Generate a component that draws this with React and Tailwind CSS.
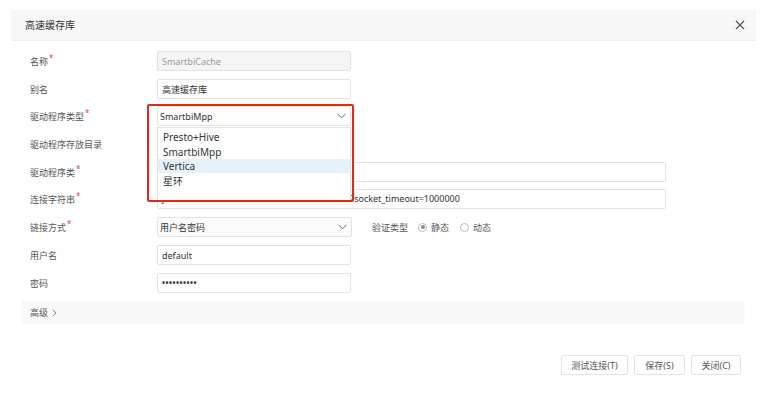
import React from "react";

const Star = () => (
  <span className="text-[#e5484d] text-[8px] relative -top-[3px] ml-[1px]">*</span>
);

const Chevron = () => (
  <svg width="9" height="6" viewBox="0 0 9 6" className="shrink-0">
    <path d="M0.5 0.8 L4.5 4.8 L8.5 0.8" fill="none" stroke="#666" strokeWidth="1" />
  </svg>
);

function Label({ text, star }) {
  return (
    <div className="w-[127px] shrink-0 text-[9px] text-[#555] leading-none flex items-center">
      {text}
      {star && <Star />}
    </div>
  );
}

function Input({ value, disabled, wide, dots, lift }) {
  return (
    <div
      className={`h-[20px] ${wide ? "w-[509px]" : "w-[194px]"} border border-[#e3e3e3] rounded-[2px] flex items-center pl-[4px] text-[9px] leading-none overflow-hidden whitespace-nowrap ${
        disabled ? "bg-[#f5f5f5] text-[#999]" : "bg-white text-[#333]"
      }`}
    >
      {dots ? (
        <span className="tracking-[0.5px] text-[8px] font-bold">••••••••••</span>
      ) : (
        <span className={lift ? "relative -top-[1px]" : ""}>{value}</span>
      )}
    </div>
  );
}

function Select({ value, w = "w-[194px]", bg = "bg-white" }) {
  return (
    <div className={`h-[20px] ${w} border border-[#e3e3e3] rounded-[2px] flex items-center justify-between pl-[2px] pr-[4px] text-[9px] leading-none text-[#333] ${bg}`}>
      <span>{value}</span>
      <Chevron />
    </div>
  );
}

function Radio({ checked, label }) {
  return (
    <div className="flex items-center gap-[4px]">
      <div className="w-[9px] h-[9px] rounded-full border border-[#bdbdbd] bg-white flex items-center justify-center">
        {checked && <div className="w-[4px] h-[4px] rounded-full bg-[#8a8a8a]" />}
      </div>
      <span className="text-[9px] text-[#555] leading-none">{label}</span>
    </div>
  );
}

function Row({ mt, children }) {
  return <div className={`flex items-center h-[20px] ${mt}`}>{children}</div>;
}

export default function App() {
  return (
    <div className="relative w-[770px] h-[416px] bg-white overflow-hidden font-['Noto_Sans','Noto_Sans_CJK_SC',sans-serif]">
      {/* header */}
      <div className="mt-[10px] ml-[11px] w-[745px] h-[31px] bg-[#f7f7f7] border-b border-[#eeeeee] flex items-center justify-between pl-[14px] pr-[11px]">
        <span className="text-[10px] text-[#333] leading-none">高速缓存库</span>
        <svg width="10" height="10" viewBox="0 0 10 10">
          <path d="M1 1 L9 9 M9 1 L1 9" stroke="#555" strokeWidth="1.2" fill="none" />
        </svg>
      </div>

      {/* form */}
      <div className="pl-[30px] flex flex-col">
        <Row mt="mt-[10px]">
          <Label text="名称" star />
          <Input value="SmartbiCache" disabled />
        </Row>
        <Row mt="mt-[8px]">
          <Label text="别名" />
          <Input value="高速缓存库" />
        </Row>
        <Row mt="mt-[7px]">
          <Label text="驱动程序类型" star />
          <Select value="SmartbiMpp" />
        </Row>
        <Row mt="mt-[8px]">
          <Label text="驱动程序存放目录" />
          <Input value="" />
        </Row>
        <Row mt="mt-[8px]">
          <Label text="驱动程序类" star />
          <Input value="" wide />
        </Row>
        <Row mt="mt-[7px]">
          <Label text="连接字符串" star />
          <Input value="jdbc:clickhouse://10.10.204.126:8123/default?socket_timeout=1000000" wide lift />
        </Row>
        <Row mt="mt-[8px]">
          <Label text="链接方式" star />
          <Select value="用户名密码" w="w-[195px]" bg="bg-[#fbfbfb]" />
          <span className="ml-[20px] text-[9px] text-[#555] leading-none">验证类型</span>
          <div className="ml-[10px] flex items-center gap-[11px]">
            <Radio checked label="静态" />
            <Radio label="动态" />
          </div>
        </Row>
        <Row mt="mt-[8px]">
          <Label text="用户名" />
          <Input value="default" />
        </Row>
        <Row mt="mt-[8px]">
          <Label text="密码" />
          <Input dots />
        </Row>
      </div>

      {/* advanced bar */}
      <div className="mt-[8px] ml-[22px] w-[723px] h-[23px] bg-[#f9f9f9] flex items-center pl-[8px] text-[9px] text-[#555] leading-none">
        高级
        <svg width="5" height="8" viewBox="0 0 5 8" className="ml-[4px]">
          <path d="M0.8 0.8 L4 4 L0.8 7.2" fill="none" stroke="#777" strokeWidth="0.9" />
        </svg>
      </div>

      {/* buttons */}
      <div className="mt-[31px] w-[741px] flex justify-end gap-[6px]">
        <button className="h-[20px] w-[67px] bg-white border border-[#e3e3e3] rounded-[2px] text-[9px] text-[#555] leading-none">测试连接(T)</button>
        <button className="h-[20px] w-[51px] bg-white border border-[#e3e3e3] rounded-[2px] text-[9px] text-[#555] leading-none">保存(S)</button>
        <button className="h-[20px] w-[50px] bg-white border border-[#e3e3e3] rounded-[2px] text-[9px] text-[#555] leading-none">关闭(C)</button>
      </div>

      {/* open dropdown menu */}
      <div className="absolute z-10 left-[157px] top-[127px] w-[194px] h-[74px] bg-white border border-[#e3e3e3] pt-[2px] text-[10px] text-[#333] leading-none">
        <div className="h-[14px] flex items-center pl-[5px]">Presto+Hive</div>
        <div className="h-[15px] flex items-center pl-[5px]">SmartbiMpp</div>
        <div className="h-[14px] flex items-center pl-[5px] bg-[#e5f1fb]">Vertica</div>
        <div className="h-[15px] flex items-center pl-[5px]">星环</div>
      </div>

      {/* red annotation box */}
      <div className="absolute z-20 left-[147px] top-[104px] w-[207px] h-[98px] border-2 border-[#e02a20] rounded-[2px] pointer-events-none" />
    </div>
  );
}
